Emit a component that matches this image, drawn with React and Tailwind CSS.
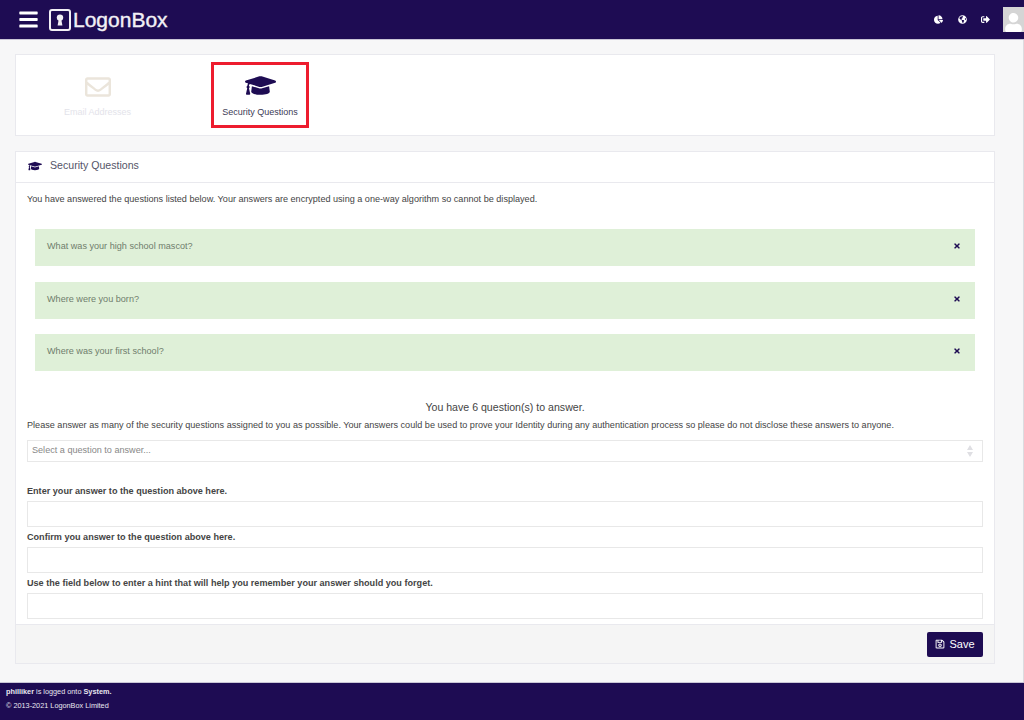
import React from "react";
import { FaGraduationCap, FaRegEnvelope, FaRegSave, FaTimes, FaChartPie, FaGlobeAmericas, FaSignOutAlt, FaUser, FaBars } from "react-icons/fa";

const NAVY = "text-[#1e0c53]";

function Alert({ children }) {
  return (
    <div className="h-[37px] bg-[#dff0d8] flex items-center justify-between pl-3 pr-[14px] text-[#6f7d6c] text-[9.1px]">
      <span className="-mt-[1px]">{children}</span>
      <FaTimes className={`w-[8px] h-[8px] -mt-[3px] ${NAVY}`} />
    </div>
  );
}

function Field({ label }) {
  return (
    <div>
      <div className="h-[20px] pt-[1px] flex items-center text-[9.1px] font-bold text-[#444]">{label}</div>
      <div className="h-[26px] bg-white border border-[#e8e8e8]" />
    </div>
  );
}

export default function App() {
  return (
    <div className="w-[1024px] h-[720px] overflow-hidden flex flex-col bg-[#f7f7f8] font-['Liberation_Sans',Arial,sans-serif]">
      <header className="h-[40px] shrink-0 bg-[#1e0c53] border-b border-[#c9c6d6] flex items-center pl-[18px]">
        <FaBars className="w-[21px] h-[21px] text-white" />
        <div className="ml-[10px] w-[22px] h-[22px] rounded-[3px] border-2 border-[#f2f0f5] flex items-center justify-center">
          <svg viewBox="0 0 10 14" className="w-[8px] h-[12px]" fill="#f2f0f5">
            <circle cx="5" cy="4" r="4" />
            <path d="M3.4 6h3.2L8 14H2z" />
          </svg>
        </div>
        <span className="ml-[2px] text-[21px] leading-none text-[#f2f0f5] [-webkit-text-stroke:0.4px_#f2f0f5]">LogonBox</span>
        <div className="ml-auto flex items-center">
          <FaChartPie className="w-[9px] h-[9px] text-white" />
          <FaGlobeAmericas className="ml-[15px] w-[9px] h-[9px] text-white" />
          <FaSignOutAlt className="ml-[14px] w-[9px] h-[9px] text-white" />
          <div className="ml-[13px] w-[21px] h-[25px] bg-[#d5d5d5] flex items-end justify-center overflow-hidden">
            <FaUser className="w-[17px] h-[19px] text-white" />
          </div>
        </div>
      </header>

      <main className="flex-1 min-h-0 pl-[15px] pr-[28px] pt-[14px] border-r border-[#dcdce0]">
        <section className="h-[82px] bg-white border border-[#e9e9ee] flex">
          <div className="w-[163px] flex flex-col items-center pt-[19px] text-[#e3e3ea]">
            <FaRegEnvelope className="w-[26px] h-[26px] text-[#ebe5db]" />
            <span className="mt-[6px] text-[9px] leading-[12px]">Email Addresses</span>
          </div>
          <div className="ml-[32px] mt-[7px] w-[98px] h-[66px] border-[3px] border-[#ed1c2e] flex flex-col items-center pt-[5px] text-[#1e0c53]">
            <FaGraduationCap className="w-[31px] h-[31px]" />
            <span className="mt-[5px] text-[9px] leading-[12px] text-[#3c3a55]">Security Questions</span>
          </div>
        </section>

        <section className="mt-[15px] h-[513px] bg-white border border-[#e9e9ee] flex flex-col">
          <div className="h-[31px] shrink-0 border-b border-[#e9e9ee] flex items-center pl-[12px]">
            <FaGraduationCap className={`w-[14px] h-[14px] -mt-[2px] ${NAVY}`} />
            <span className="ml-[8px] text-[10.6px] text-[#555568] -mt-[2px]">Security Questions</span>
          </div>

          <div className="flex-1 min-h-0 px-[11px] overflow-hidden">
            <p className="h-[34px] flex items-center text-[9.1px] text-[#444]">
              You have answered the questions listed below. Your answers are encrypted using a one-way algorithm so cannot be displayed.
            </p>
            <div className="mt-[12px] mx-[8px] flex flex-col gap-[15.5px]">
              <Alert>What was your high school mascot?</Alert>
              <Alert>Where were you born?</Alert>
              <Alert>Where was your first school?</Alert>
            </div>
            <div className="mt-[29px] text-center text-[10.6px] leading-[14px] text-[#444]">You have 6 question(s) to answer.</div>
            <p className="mt-[4px] text-[9.1px] leading-[14px] text-[#444]">
              Please answer as many of the security questions assigned to you as possible. Your answers could be used to prove your Identity during any authentication process so please do not disclose these answers to anyone.
            </p>
            <div className="mt-[8px] h-[22px] border border-[#e8e8e8] flex items-center justify-between pl-[4px] pr-[9px] text-[9.1px] text-[#888]">
              <span>Select a question to answer...</span>
              <svg viewBox="0 0 6 12" className="w-[6px] h-[12px]" fill="#dfdfe3">
                <path d="M3 0l3 5H0zM3 12L0 7h6z" />
              </svg>
            </div>
            <div className="mt-[19px] flex flex-col gap-0">
              <Field label="Enter your answer to the question above here." />
              <Field label="Confirm you answer to the question above here." />
              <Field label="Use the field below to enter a hint that will help you remember your answer should you forget." />
            </div>
          </div>

          <div className="h-[39px] shrink-0 bg-[#f5f5f5] border-t border-[#e9e9ee] flex items-center justify-end pr-[11px]">
            <button className="w-[56px] h-[25px] bg-[#1e0c53] rounded-[2px] flex items-center justify-center gap-[4px] text-white text-[11px]">
              <FaRegSave className="w-[10px] h-[10px]" />
              Save
            </button>
          </div>
        </section>
      </main>

      <footer className="h-[38px] shrink-0 bg-[#1e0c53] border-t border-[#c9c6d6] pl-[6px] pt-[2px] text-[7.3px] leading-[14px] text-[#e9e7f0]">
        <div><b>philliker</b> is logged onto <b>System.</b></div>
        <div>© 2013-2021 LogonBox Limited</div>
      </footer>
    </div>
  );
}
